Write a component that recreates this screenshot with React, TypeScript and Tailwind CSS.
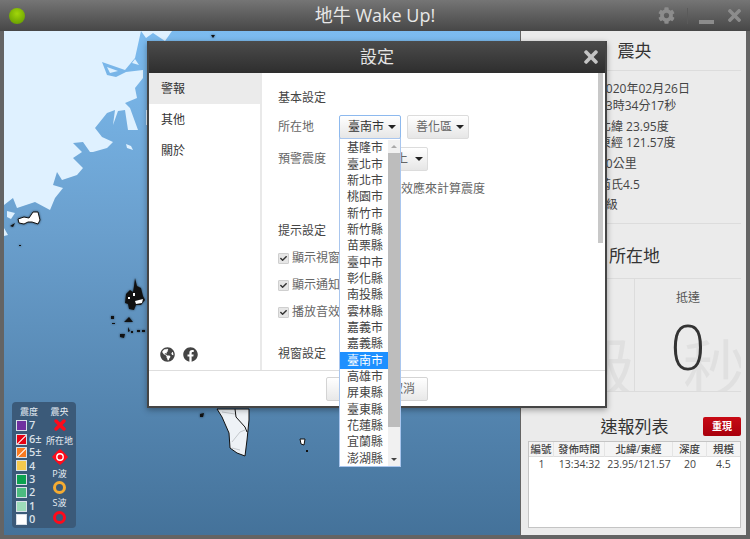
import { FaCheck, FaCog, FaFacebook, FaGlobeAmericas, FaTimes } from 'react-icons/fa'

const cities = ['基隆市', '臺北市', '新北市', '桃園市', '新竹市', '新竹縣', '苗栗縣', '臺中市', '彰化縣', '南投縣', '雲林縣', '嘉義市', '嘉義縣', '臺南市', '高雄市', '屏東縣', '臺東縣', '花蓮縣', '宜蘭縣', '澎湖縣']

const scale = [
  { label: '7', color: 'bg-[#7030a0]', slash: false },
  { label: '6±', color: 'bg-[#e60012]', slash: true },
  { label: '5±', color: 'bg-[#f97a20]', slash: true },
  { label: '4', color: 'bg-[#f4c94e]', slash: false },
  { label: '3', color: 'bg-[#0ca24f]', slash: false },
  { label: '2', color: 'bg-[#4dbb80]', slash: false },
  { label: '1', color: 'bg-[#9ddcb9]', slash: false },
  { label: '0', color: 'bg-white', slash: false },
]

function MapDrawing() {
  return (
    <svg className="absolute inset-0 h-full w-full" viewBox="4 31 516 504">
      <defs>
        <linearGradient id="sea" x1="0" y1="0" x2="0" y2="1">
          <stop offset="0" stopColor="#7cbbef" />
          <stop offset="0.4" stopColor="#6a9fcd" />
          <stop offset="1" stopColor="#44729a" />
        </linearGradient>
      </defs>
      <rect x="4" y="31" width="516" height="504" fill="#dff1ff" />
      <path
        fill="url(#sea)"
        d="M141 31 L146 38 L153 33 L165 41 L172 31 L520 31 L520 535 L4 535 L4 205 L13 198 L17 208 L35 202 L50 210 L55 198 L63 188 L53 185 L57 172 L62 180 L77 175 L83 168 L73 158 L82 152 L73 143 L83 142 L90 152 L93 152 L107 148 L113 142 L102 137 L95 128 L107 113 L115 110 L113 125 L118 111 L125 110 L128 130 L138 130 L130 108 L125 103 L137 98 L135 88 L143 78 L143 70 L126 72 L116 77 L107 75 L102 62 L125 70 L135 58 Z"
      />
      <path fill="#dff1ff" d="M107 67 L118 71 L110 73 Z M135 59 L139 65 L132 63 Z M126 144 L131 146 L133 150 L127 148 Z M7 211 L15 213 L11 219 L7 217 Z M4 228 L8 235 L4 236 Z M146 110 L149 110 L149 125 L146 125 Z" />
      <g className="drop-shadow-[0_0_1px_rgba(0,0,0,0.6)]">
        <path fill="#fff" stroke="#111" strokeWidth="1" d="M18 219 L24 217 L29 218 L33 212 L38 212 L40 220 L38 224 L32 222 L28 222 L24 224 L19 223 Z" />
        <path fill="#111" d="M10 226 L15 223 L13 227 Z M19 245 h2 v1 h-2 Z" />
        <path fill="#111" d="M135 278 L137 286 L141 288 L143 296 L145 300 L141 305 L136 305 L134 310 L129 309 L128 304 L125 303 L126 294 L130 290 L133 292 L134 286 Z" />
        <path fill="#fff" d="M135 301 L143 299 L142 303 L136 304 Z M133 293 l2 0 l0 3 l-2 0 Z M128 297 l2 0 l0 2 l-2 0 Z" />
        <path fill="#111" d="M124 322 L129 317 L133 322 Z M120 334 L125 334 L124 338 L120 337 Z M128 327 L130 331 L128 332 Z M137 330 h3 v2 h-3 Z M142 330 h3 v2 h-3 Z M111 316 h3 v3 h-3 Z M112 323 h3 v1 h-3 Z M131 331 h2 v2 h-2 Z M200 414 L204 413 L203 417 L200 417 Z M211 35 L215 35 L213 38 Z" />
      </g>
      <path fill="#eef2f6" stroke="#111" strokeWidth="1" d="M217 409 L222 417 L229 433 L230 448 L237 453 L245 456 L247 440 L249 420 L249 409 Z" />
      <path fill="none" stroke="#111" strokeWidth="1" d="M235 409 L236 417 L245 427 L247 432" />
      <path fill="none" stroke="#c4c8cc" strokeWidth="1" d="M222 412 L235 414 M232 442 L240 432 L245 430 M232 448 L240 450" />
      <path fill="#fff" stroke="#111" strokeWidth="1" d="M300 439 L305 439 L304 445 L301 444 Z" />
      <rect x="306" y="450" width="2" height="2" fill="#111" />
    </svg>
  )
}

function Legend() {
  return (
    <div className="absolute left-[8px] top-[371px] flex h-[126px] w-[64px] rounded bg-[#3b5a79] text-[9px] text-[#e8eef4]">
      <div className="flex w-[31px] shrink-0 flex-col pl-[4px] pt-[3px]">
        <div className="h-[14px] pl-[4px] leading-[14px] whitespace-nowrap">震度</div>
        {scale.map((s) => (
          <div key={s.label} className="flex h-[13.4px] items-center gap-[2px]">
            <div className={`relative h-[11px] w-[11px] shrink-0 overflow-hidden border border-[#d8e0e8] ${s.color}`}>
              {s.slash && <div className="absolute left-[-2px] top-[4px] h-px w-[14px] -rotate-45 bg-white" />}
            </div>
            <span className="text-[11px] font-semibold text-[#d8e0e8]">{s.label}</span>
          </div>
        ))}
      </div>
      <div className="flex flex-1 flex-col items-center pt-[3px]">
        <div className="h-[14px] leading-[14px]">震央</div>
        <svg className="shrink-0" width="12" height="12" viewBox="0 0 12 12">
          <path d="M2 2 L10 10 M10 2 L2 10" stroke="#ff0a1a" strokeWidth="3.4" strokeLinecap="round" />
        </svg>
        <div className="mt-[3px] h-[14px] whitespace-nowrap leading-[14px]">所在地</div>
        <svg className="mt-[1px] shrink-0" width="16" height="16" viewBox="0 0 16 16">
          <path d="M8 0 L11 2.6 L13.4 5 L16 8 L13.4 11 L11 13.4 L8 16 L5 13.4 L2.6 11 L0 8 L2.6 5 L5 2.6 Z" fill="#ff0a1a" />
          <circle cx="8" cy="8" r="3.9" fill="#fff" />
          <circle cx="8" cy="8" r="2.5" fill="#ff0a1a" />
        </svg>
        <div className="mt-[2px] h-[14px] leading-[14px]">P波</div>
        <div className="h-[13px] w-[13px] shrink-0 rounded-full border-[3px] border-[#f5ac32]" />
        <div className="mt-[2px] h-[14px] leading-[14px]">S波</div>
        <div className="mt-[1px] h-[13px] w-[13px] shrink-0 rounded-full border-[3px] border-[#ff0a1a]" />
      </div>
    </div>
  )
}

function Select({ label, width, focus }: { label: string; width: string; focus?: boolean }) {
  return (
    <div className={`flex h-[24px] items-center justify-between rounded-[2px] border bg-gradient-to-b from-white to-[#e6e6e6] pl-[8px] pr-[4px] text-[12px] ${width} ${focus ? 'border-[#8db9ee] text-[#333]' : 'border-[#dcdcdc] text-[#666]'}`}>
      <span>{label}</span>
      <span className="h-0 w-0 border-x-[4px] border-t-[4px] border-x-transparent border-t-[#222]" />
    </div>
  )
}

function Check({ label }: { label: string }) {
  return (
    <div className="flex h-[16px] items-center gap-[3px] text-[12px] text-[#666]">
      <span className="flex h-[11px] w-[11px] items-center justify-center rounded-[1px] border border-[#cfcfcf] bg-[#e6e6e6]">
        <FaCheck className="text-[7px] text-[#333]" />
      </span>
      <span className="whitespace-nowrap">{label}</span>
    </div>
  )
}

function SettingsModal() {
  return (
    <div className="absolute left-[147px] top-[41px] flex h-[367px] w-[460px] flex-col border-2 border-t-0 border-[#454545] bg-white shadow-[0_2px_6px_rgba(0,0,0,0.35)]">
      <div className="relative flex h-[32px] shrink-0 items-center justify-center bg-gradient-to-b from-[#4c4c4c] to-[#2e2e2e] text-[17px] text-[#e4e4e4]">
        設定
        <FaTimes className="absolute right-[4px] top-[6px] text-[20px] text-[#c4c4c4]" />
      </div>
      <div className="relative flex min-h-0 flex-1">
        <div className="flex w-[113px] shrink-0 flex-col border-r-2 border-[#e9e9e9] text-[12px] text-[#333]">
          <div className="flex h-[31px] items-center bg-[#ebebeb] pl-[12px]">警報</div>
          <div className="flex h-[31px] items-center pl-[12px]">其他</div>
          <div className="flex h-[31px] items-center pl-[12px]">關於</div>
          <div className="mt-auto mb-[8px] flex gap-[8px] pl-[11px] text-[15px] text-[#444]">
            <FaGlobeAmericas />
            <FaFacebook />
          </div>
        </div>
        <div className="flex min-w-0 flex-1 flex-col overflow-hidden pl-[16px] text-[12px] text-[#444]">
          <div className="mt-[17px] h-[16px] leading-[16px]">基本設定</div>
          <div className="mt-[9px] flex items-center">
            <span className="w-[61px] text-[#666]">所在地</span>
            <Select label="臺南市" width="w-[62px]" focus />
            <div className="ml-[6px]">
              <Select label="善化區" width="w-[62px]" />
            </div>
          </div>
          <div className="mt-[8px] flex items-center">
            <span className="w-[61px] text-[#666]">預警震度</span>
            <Select label="　　　以上" width="w-[89px]" />
          </div>
          <div className="ml-[61px] mt-[10px]">
            <Check label="考慮場地效應來計算震度" />
          </div>
          <div className="mt-[26px] h-[16px] leading-[16px]">提示設定</div>
          <div className="mt-[11px] flex flex-col gap-[11px]">
            <Check label="顯示視窗" />
            <Check label="顯示通知" />
            <Check label="播放音效" />
          </div>
          <div className="mt-[26px] h-[16px] leading-[16px]">視窗設定</div>
        </div>
        <div className="absolute right-[2px] top-0 h-[170px] w-[5px] bg-[#c8c8c8]" />
      </div>
      <div className="flex h-[36px] shrink-0 items-center gap-[2px] border-t border-[#dedede] pl-[177px]">
        <div className="flex h-[24px] w-[50px] items-center justify-center rounded-[2px] border border-[#d4d4d4] bg-gradient-to-b from-white to-[#e8e8e8] text-[12px] text-[#666]">確定</div>
        <div className="flex h-[24px] w-[50px] items-center justify-center rounded-[2px] border border-[#d4d4d4] bg-gradient-to-b from-white to-[#e8e8e8] text-[12px] text-[#666]">取消</div>
      </div>
      <div className="absolute left-[190px] top-[97px] flex h-[329px] w-[62px] flex-row border border-[#a9c6ee] bg-white pt-px text-[12px] text-[#444]">
        <div className="flex-1">
          {cities.map((c) => (
            <div key={c} className={`flex h-[16.35px] items-center pl-[7px] ${c === '臺南市' ? 'bg-[#1e90ff] text-white' : ''}`}>{c}</div>
          ))}
        </div>
        <div className="flex w-[12px] flex-col items-center bg-[#f1f1f1]">
          <span className="mt-[5px] h-0 w-0 border-x-[3px] border-b-[3px] border-x-transparent border-b-[#aaa]" />
          <div className="mt-[5px] h-[274px] w-full bg-[#bdbdbd]" />
          <span className="mt-auto mb-[5px] h-0 w-0 border-x-[3px] border-t-[3px] border-x-transparent border-t-[#444]" />
        </div>
      </div>
    </div>
  )
}

function InfoPanel() {
  return (
    <div className="flex w-[225px] flex-col bg-[#ebebeb] pl-[7px] pr-[5px] text-[#444]">
      <div className="flex h-[40px] items-center justify-center border-b border-[#dcdcdc] text-[17px] text-[#333]">震央</div>
      <div className="flex h-[153px] flex-col border-b border-[#dcdcdc] pl-[71px] pt-[9px] text-[12px] leading-[17px]">
        <div>2020年02月26日</div>
        <div>13時34分17秒</div>
        <div className="mt-[4px]">北緯 23.95度</div>
        <div className="-mt-px">東經 121.57度</div>
        <div className="mt-[4px]">20公里</div>
        <div className="mt-[4px]">芮氏4.5</div>
        <div className="mt-[3px]">3級</div>
      </div>
      <div className="flex h-[55px] items-end justify-center border-b border-[#dcdcdc] pb-[10px] text-[17px] text-[#333]">所在地</div>
      <div className="flex h-[113px] border-b border-[#dcdcdc]">
        <div className="relative w-[107px] overflow-hidden border-r border-[#dcdcdc]">
          <span className="absolute bottom-[-8px] right-[-1px] text-[64px] leading-none text-[#e0e0e0]">級</span>
        </div>
        <div className="relative flex flex-1 flex-col items-center overflow-hidden pt-[10px]">
          <span className="absolute bottom-[-10px] right-[-6px] text-[64px] leading-none text-[#e0e0e0]">秒</span>
          <span className="relative text-[12px] text-[#555]">抵達</span>
          <span className="relative mt-[4px] text-[62px] font-light leading-[70px] text-[#333]">0</span>
        </div>
      </div>
      <div className="relative flex h-[49px] items-center justify-center pt-[20px] text-[17px] text-[#333]">
        速報列表
        <div className="absolute right-0 top-[25px] flex h-[19px] w-[38px] items-center justify-center rounded-[2px] bg-gradient-to-b from-[#c80a14] to-[#a8000c] text-[10px] font-bold text-white">重現</div>
      </div>
      <div className="h-[87px] border border-[#c4c4c4] bg-white text-[10.5px] text-[#444]">
        <div className="grid h-[15px] grid-cols-[25px_51px_68px_34px_1fr] border-b border-[#dedede] bg-[#f4f4f4] text-center font-medium leading-[15px]">
          <div className="border-r border-[#e4e4e4]">編號</div>
          <div className="border-r border-[#e4e4e4]">發佈時間</div>
          <div className="border-r border-[#e4e4e4]">北緯/東經</div>
          <div className="border-r border-[#e4e4e4]">深度</div>
          <div>規模</div>
        </div>
        <div className="grid h-[15px] grid-cols-[25px_51px_68px_34px_1fr] text-center leading-[15px]">
          <div>1</div>
          <div>13:34:32</div>
          <div>23.95/121.57</div>
          <div>20</div>
          <div>4.5</div>
        </div>
      </div>
    </div>
  )
}

export default function App() {
  return (
    <div className="relative flex h-[539px] w-[750px] flex-col overflow-hidden bg-[#646464] [font-family:'Open_Sans','Noto_Sans_CJK_TC',sans-serif]">
      <div className="relative flex h-[31px] shrink-0 items-center justify-center bg-gradient-to-b from-[#757575] to-[#474747] text-[18px] text-[#e8e8e8]">
        地牛 Wake Up!
        <div className="absolute left-[9px] top-[8px] h-[16px] w-[16px] rounded-full bg-[radial-gradient(circle_at_50%_35%,#a2d60a,#5c9400)]" />
        <FaCog className="absolute left-[658px] top-[7px] text-[17px] text-[#8c8c8c]" />
        <div className="absolute left-[687px] top-[8px] h-[16px] w-px bg-[#5a5a5a]" />
        <div className="absolute left-[699px] top-[20px] h-[4px] w-[15px] bg-[#8c8c8c]" />
        <FaTimes className="absolute left-[725px] top-[6px] text-[19px] text-[#8c8c8c]" />
      </div>
      <div className="flex min-h-0 flex-1 gap-px pb-[4px] pl-[4px] pr-[4px]">
        <div className="relative flex-1 overflow-hidden">
          <MapDrawing />
          <Legend />
        </div>
        <InfoPanel />
      </div>
      <SettingsModal />
    </div>
  )
}
